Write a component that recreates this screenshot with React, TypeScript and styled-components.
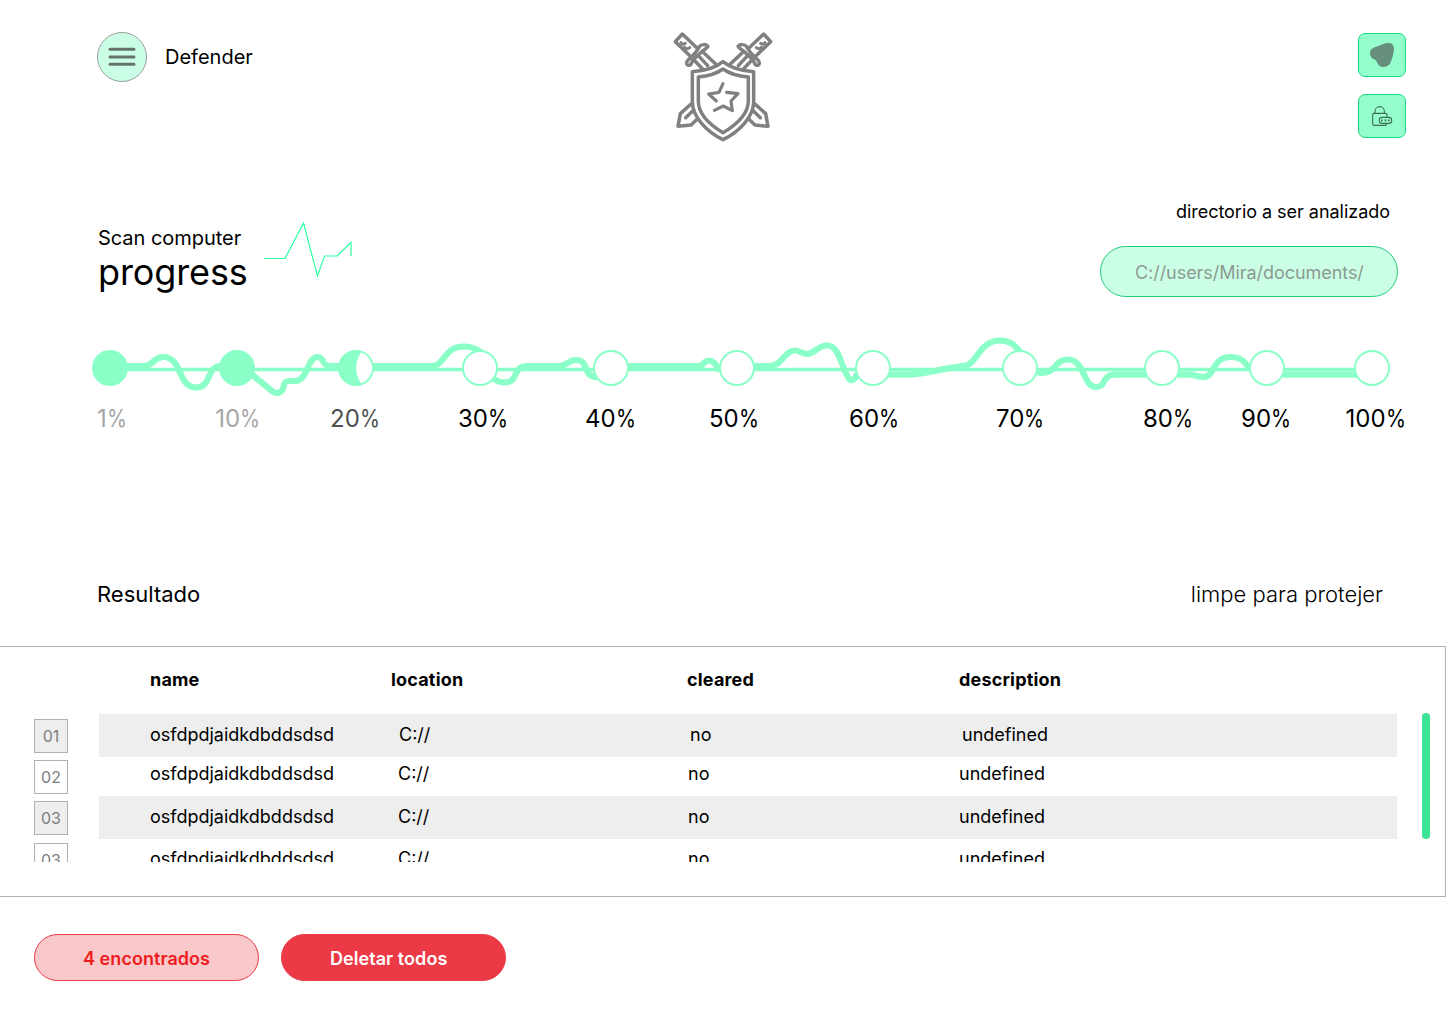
import React from 'react';
import styled, { createGlobalStyle } from 'styled-components';

const GlobalStyle = createGlobalStyle`
  * { box-sizing: border-box; }
  body { margin: 0; background: #fff; }
`;

const mint = '#8affc8';

const Page = styled.main`
  width: 1446px;
  height: 1024px;
  overflow: hidden;
  display: flex;
  flex-direction: column;
  background: #fff;
  color: #000;
  font-family: Inter, 'Liberation Sans', sans-serif;
  font-size: 18px;
  line-height: 22px;
  white-space: nowrap;
`;

const Header = styled.header`
  display: grid;
  grid-template-columns: 563px 126px 1fr;
  align-items: start;
  height: 200px;
  padding: 20px 40px 0 97px;
`;

const Brand = styled.div`
  display: flex;
  align-items: center;
  gap: 18px;
  margin-top: 12px;
  font-size: 20px;
`;

const MenuButton = styled.button`
  display: grid;
  place-items: center;
  width: 50px;
  height: 50px;
  padding: 0;
  border: 1px solid #979f9b;
  border-radius: 50%;
  background: #cbffe5;
`;

const Tools = styled.nav`
  display: flex;
  flex-direction: column;
  align-items: flex-end;
  gap: 17px;
  margin-top: 13px;
`;

const ToolButton = styled.button`
  display: grid;
  place-items: center;
  width: 48px;
  height: 44px;
  padding: 0;
  border: 1px solid #17dc83;
  border-radius: 7px;
  background: #94ffcd;
`;

const ScanBar = styled.section`
  display: flex;
  justify-content: space-between;
  height: 130px;
  padding: 0 48px 0 98px;
`;

const ScanTitle = styled.div`
  display: flex;
  gap: 16px;
  padding-top: 22px;
`;

const Heading = styled.h1`
  width: 149px;
  margin: 5px 0 0;
  font-size: 20px;
  font-weight: 400;
  letter-spacing: -0.04px;
  line-height: 22px;
`;

const Big = styled.span`
  display: block;
  margin-top: 1px;
  font-size: 36px;
  letter-spacing: -0.12px;
  line-height: 44px;
`;

const Directory = styled.div`
  display: flex;
  flex-direction: column;
`;

const DirectoryLabel = styled.label`
  margin: 1px 8px 0 0;
  letter-spacing: -0.03px;
  text-align: right;
`;

const DirectoryField = styled.div`
  display: flex;
  align-items: center;
  width: 298px;
  height: 51px;
  margin-top: 23px;
  padding: 2px 0 0 34px;
  border: 1px solid #21cd7d;
  border-radius: 26px;
  background: #cbffe5;
  color: #8b9a92;
  letter-spacing: -0.05px;
`;

const Track = styled.section`
  height: 230px;
`;

const TrackLabels = styled.div`
  display: grid;
  padding: 1px 0 0 96px;
  font-size: 24px;
  line-height: 30px;
`;

const TrackLabel = styled.span<{ $color: string; $inset: number }>`
  padding-left: ${(p) => p.$inset}px;
  color: ${(p) => p.$color};
`;

const Percent = styled.span`
  display: inline-block;
  transform: scaleX(0.85);
  transform-origin: left center;
`;

const ResultHeading = styled.section`
  display: flex;
  justify-content: space-between;
  height: 86px;
  padding: 20px 63px 0 97px;
  font-size: 22px;
  line-height: 28px;
`;

const Light = styled.span`
  font-weight: 300;
`;

const Table = styled.section`
  height: 251px;
  border: 1px solid #b0b0b0;
  border-left: 0;
`;

const HeadRow = styled.div`
  display: grid;
  grid-template-columns: 241px 296px 272px 1fr;
  height: 66px;
  padding: 22px 0 0 150px;
  font-weight: 700;
  letter-spacing: 0.18px;
`;

const TableBody = styled.div`
  display: flex;
  gap: 25px;
`;

const Rows = styled.div`
  width: 1397px;
  height: 148px;
  margin-top: 1px;
  overflow: hidden;
`;

const Row = styled.div<{ $height: number }>`
  display: flex;
  align-items: flex-start;
  gap: 31px;
  height: ${(p) => p.$height}px;
  padding-left: 34px;
`;

const Index = styled.span<{ $shaded: boolean; $top: number }>`
  flex: none;
  width: 34px;
  height: 34px;
  margin-top: ${(p) => p.$top}px;
  border: 1px solid #b0b0b0;
  background: ${(p) => (p.$shaded ? '#eeeeee' : '#ffffff')};
  color: #7d7d7d;
  font-size: 16px;
  line-height: 33px;
  text-align: center;
`;

const Cells = styled.div<{ $shaded: boolean; $top: number; $shift: number }>`
  display: grid;
  grid-template-columns: ${(p) => 248 + p.$shift}px ${(p) => 290 + p.$shift}px ${(p) => 271 + p.$shift}px 1fr;
  flex: 1;
  height: 100%;
  padding: ${(p) => p.$top}px 0 0 51px;
  background: ${(p) => (p.$shaded ? '#eeeeee' : '#ffffff')};
  line-height: 21px;
`;

const ScrollThumb = styled.div`
  width: 8px;
  height: 126px;
  border-radius: 4px;
  background: #3ae695;
`;

const Actions = styled.footer`
  display: flex;
  gap: 22px;
  padding: 37px 34px 0;
`;

const Pill = styled.button<{ $solid?: boolean }>`
  width: 225px;
  height: 47px;
  padding: 2px 0 0 48px;
  border: 1px solid #eb3946;
  border-radius: 24px;
  background: ${(p) => (p.$solid ? '#eb3946' : '#f9c8ca')};
  color: ${(p) => (p.$solid ? '#fff' : '#ee1c1c')};
  font: 600 18px/22px Inter, 'Liberation Sans', sans-serif;
  letter-spacing: 0.05px;
  text-align: left;
`;

const steps = [
  { value: 1, cx: 110, width: 119, inset: 1, color: '#a6a6a6' },
  { value: 10, cx: 237, width: 115, inset: 0.3, color: '#a6a6a6' },
  { value: 20, cx: 356, width: 128, inset: 0, color: '#4f4f4f' },
  { value: 30, cx: 480, width: 127, inset: 0, color: '#000' },
  { value: 40, cx: 611, width: 124, inset: 0, color: '#000' },
  { value: 50, cx: 737, width: 140, inset: 0, color: '#000' },
  { value: 60, cx: 873, width: 146, inset: 0, color: '#000' },
  { value: 70, cx: 1020, width: 148, inset: 1, color: '#000' },
  { value: 80, cx: 1162, width: 98, inset: 0, color: '#000' },
  { value: 90, cx: 1267, width: 104, inset: 0, color: '#000' },
  { value: 100, cx: 1372, width: 80, inset: 0.5, color: '#000' },
];

const waves = [
  'M126 366H144C154 366 153 357 163 357C183 357 177 387.5 196 387.5C212 387.5 206 366 221 366',
  'M250 373L271.5 390.5C276 395 283 392.5 283.5 387C284 381 287 381 290 381H295C308 381 307 357 317.5 357C325 357 321 366 330 366H342',
  'M372 366H431C446 366 443 346.5 464 346.5C472 346.5 477 349 482 353',
  'M494 379C498 382 501 382.5 505 382.5C519 382.5 512 366 527 366H560C566 366 568 360 576 360C590 360 582 377 597 377',
  'M626 366H699C704 366 703 360.5 709 360.5C714 360.5 716 365 720 371',
  'M753 366H769C783 366 784 350.5 795 350.5C800 350.5 802 354 807 354C814 354 818 345.5 827 345.5C839 345.5 841 366 848 377C850 381.5 855 382 857 373',
  'M889 374.7H908C930 373.5 948 367 966 365.5C977 363 980 340.5 1000 340.5C1010 340.5 1015 345 1021 353',
  'M1034 371C1038 373 1042 373 1045 372.5C1056 372 1055 359.5 1067.5 359.5C1085 359.5 1083 387 1096 387C1107 387 1101 374.7 1115 374.7H1146',
  'M1178 374.7H1190C1195 374.7 1197 377 1203 377C1216 377 1211 357 1231 357C1241 357 1245 362 1250 369',
  'M1283 374.7H1357',
];

const rows = [
  { id: '01', height: 43, index: 5, top: 10, shift: 1 },
  { id: '02', height: 39, index: 3, top: 6, shift: 0 },
  { id: '03', height: 43, index: 5, top: 10, shift: 0 },
  { id: '03', height: 39, index: 4, top: 9, shift: 0 },
];

const Sword = () => (
  <>
    <path d="M111 84L67 42L46 65L88 106" />
    <path d="M63 68C66 74 70 74 76 70M74 82C78 88 84 87 89 83" strokeWidth="9" />
    <path d="M118 80C124 72 138 72 144 79C140 87 131 89 123 97C111 109 98 119 94 130C91 138 82 138 80 130C79 122 86 119 92 113C104 102 112 92 118 80Z" />
    <path d="M131 98L167 132M118 110L143 137M105 123L127 146" />
    <path d="M93 252L61 281L54 319L93 315L116 293M104 267L77 293" />
  </>
);

const Shield = () => (
  <svg width="126" height="130" viewBox="0 0 378 390" fill="none" stroke="#808080" strokeWidth="10.5" strokeLinecap="round" strokeLinejoin="round">
    <Sword />
    <g transform="translate(378 0) scale(-1 1)">
      <Sword />
    </g>
    <path d="M189 125C165 145 130 153 97 155V245C97 290 140 335 189 359C238 335 281 290 281 245V155C248 153 213 145 189 125Z" fill="#fff" />
    <path d="M189 147C168 162 140 169 115 171V243C115 285 150 315 189 338C228 315 265 285 265 243V171C240 169 210 162 189 147Z" />
    <path d="M189 191L177 217L146 222L169 243M200 217L234 221L213 243L217 272L190 258L163 271" strokeWidth="9.5" />
  </svg>
);

const App: React.FC = () => (
  <Page>
    <GlobalStyle />
    <Header>
      <Brand>
        <MenuButton aria-label="Menu">
          <svg width="30" height="22" viewBox="0 0 30 22" stroke="#66736d" strokeWidth="3" strokeLinecap="round">
            <path d="M3 3.3H27M3 11H27M3 18.3H27" />
          </svg>
        </MenuButton>
        <span>Defender</span>
      </Brand>
      <Shield />
      <Tools>
        <ToolButton aria-label="Status">
          <svg width="46" height="42" viewBox="57 42 138 126" fill="#678f7d">
            <path d="M91 93C94 83 112 80 122 75C132 70 140 68 149 69C158 70 162 78 162 87C161 102 156 118 151 129C145 141 128 145 118 137C111 131 112 123 105 119C95 117 87 106 91 93Z" />
          </svg>
        </ToolButton>
        <ToolButton aria-label="Password">
          <svg width="46" height="42" viewBox="57 225 138 126" fill="none" stroke="#3d6d57" strokeWidth="3.3">
            <path d="M105 280V274A14 14 0 0 1 133 274V280" />
            <path d="M141 291V285Q141 280 136 280H103Q98 280 98 285V311Q98 316 103 316H136Q141 316 141 310" />
            <rect x="118" y="292" width="37" height="18" rx="8" />
            <path d="M123 301H128M134 301H139M144 301H149" strokeWidth="5" />
          </svg>
        </ToolButton>
      </Tools>
    </Header>

    <ScanBar>
      <ScanTitle>
        <Heading>
          Scan computer
          <Big>progress</Big>
        </Heading>
        <svg width="90" height="57" viewBox="263 222 90 57" fill="none" stroke="#2effa3" strokeWidth="1.2">
          <path d="M264 258.5H285L303.5 223L317.5 276L324.5 256H337L351 242.5V256" />
        </svg>
      </ScanTitle>
      <Directory>
        <DirectoryLabel>directorio a ser analizado</DirectoryLabel>
        <DirectoryField>C://users/Mira/documents/</DirectoryField>
      </Directory>
    </ScanBar>

    <Track>
      <svg width="1446" height="73" viewBox="0 330 1446 73" fill="none" stroke={mint} display="block">
        <path d="M110 369.5H1372" strokeWidth="3.6" />
        {waves.map((d) => (
          <path key={d} d={d} strokeWidth="6.2" />
        ))}
        {steps.map((s, i) => (
          <circle key={s.cx} cx={s.cx} cy="368" r="17" strokeWidth="2" fill={i < 3 ? mint : '#fff'} />
        ))}
        <path d="M361 352.6C354.5 363 354.5 373 361 383.4A16.2 16.2 0 0 0 361 352.6Z" fill="#fff" stroke="none" />
      </svg>
      <TrackLabels style={{ gridTemplateColumns: steps.map((s) => `${s.width}px`).join(' ') }}>
        {steps.map((s) => (
          <TrackLabel key={s.value} $color={s.color} $inset={s.inset}>
            {s.value}
            <Percent>%</Percent>
          </TrackLabel>
        ))}
      </TrackLabels>
    </Track>

    <ResultHeading>
      <span>Resultado</span>
      <Light>limpe para protejer</Light>
    </ResultHeading>

    <Table>
      <HeadRow>
        <span>name</span>
        <span>location</span>
        <span>cleared</span>
        <span>description</span>
      </HeadRow>
      <TableBody>
        <Rows>
          {rows.map((r, i) => (
            <Row key={i} $height={r.height}>
              <Index $shaded={i % 2 === 0} $top={r.index}>{r.id}</Index>
              <Cells $shaded={i % 2 === 0} $top={r.top} $shift={r.shift}>
                <span>osfdpdjaidkdbddsdsd</span>
                <span>C://</span>
                <span>no</span>
                <span>undefined</span>
              </Cells>
            </Row>
          ))}
        </Rows>
        <ScrollThumb />
      </TableBody>
    </Table>

    <Actions>
      <Pill>4 encontrados</Pill>
      <Pill $solid>Deletar todos</Pill>
    </Actions>
  </Page>
);

export default App;
